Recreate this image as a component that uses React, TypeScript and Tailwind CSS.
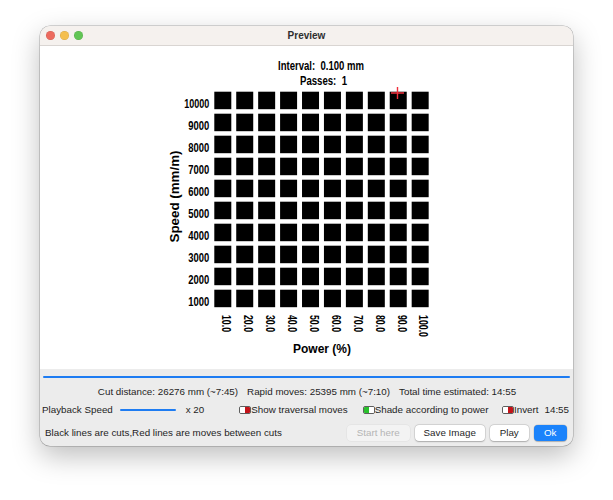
import React from "react";

const colLabels = ["10.0", "20.0", "30.0", "40.0", "50.0", "60.0", "70.0", "80.0", "90.0", "100.0"];
const rowLabels = ["10000", "9000", "8000", "7000", "6000", "5000", "4000", "3000", "2000", "1000"];

const FONT = "Liberation Sans, Arial, sans-serif";

function Chart() {
  const x0 = 174.3;
  const y0 = 45.7;
  const px = 21.93;
  const py = 22;
  return (
    <svg width={533} height={323} className="block bg-white">
      <g fontFamily={FONT} fontWeight="bold" fill="#000" fontSize={12}>
        <text x={238} y={24} xmlSpace="preserve" textLength={86} lengthAdjust="spacingAndGlyphs">
          {"Interval:  0.100 mm"}
        </text>
        <text x={260} y={39} xmlSpace="preserve" textLength={47} lengthAdjust="spacingAndGlyphs">
          {"Passes:  1"}
        </text>

        {rowLabels.map((l, j) => (
          <text
            key={l}
            x={169.3}
            y={y0 + py * j + 16.6}
            textAnchor="end"
            textLength={l.length === 5 ? 25 : 21}
            lengthAdjust="spacingAndGlyphs"
          >
            {l}
          </text>
        ))}

        {colLabels.map((l, i) => (
          <text
            key={l}
            transform={`translate(${x0 + px * i + 7.8} 269) rotate(90)`}
            x={0}
            y={0}
            textLength={l.length === 5 ? 22 : 17}
            lengthAdjust="spacingAndGlyphs"
          >
            {l}
          </text>
        ))}

        <text
          transform="translate(138.8 150.5) rotate(-90)"
          x={0}
          y={0}
          textAnchor="middle"
          fontSize={12.5}
          textLength={92}
          lengthAdjust="spacingAndGlyphs"
        >
          Speed (mm/m)
        </text>
        <text x={282} y={307.3} textAnchor="middle" fontSize={12.5} textLength={58} lengthAdjust="spacingAndGlyphs">
          Power (%)
        </text>
      </g>

      {rowLabels.map((_, j) =>
        colLabels.map((_, i) => (
          <rect key={`${i}-${j}`} x={x0 + px * i} y={y0 + py * j} width={17} height={17.5} fill="#000" />
        ))
      )}

      <g stroke="#f0303c" strokeWidth={1.4}>
        <line x1={357.5} y1={41} x2={357.5} y2={53} />
        <line x1={351} y1={47} x2={364} y2={47} />
      </g>
    </svg>
  );
}

function ToggleIcon({ green }: { green?: boolean }) {
  return (
    <span className="inline-flex h-[8px] w-[12px] shrink-0 overflow-hidden rounded-[2px] border border-[#5e5e5e]">
      <span className={green ? "h-full w-1/2 bg-[#29c12c]" : "h-full w-1/2 bg-white"} />
      <span className={green ? "h-full w-1/2 bg-white" : "h-full w-1/2 bg-[#c4141a]"} />
    </span>
  );
}

function Btn({ children, kind }: { children: React.ReactNode; kind: "disabled" | "normal" | "primary" }) {
  const base = "flex h-[16px] items-center justify-center rounded-[4px] text-[9.8px] leading-none";
  const cls =
    kind === "disabled"
      ? "bg-[#f3f3f3] text-[#b5b5b5] shadow-[0_0_0_0.5px_rgba(0,0,0,0.06)]"
      : kind === "primary"
      ? "bg-[#1b83fb] text-white font-medium shadow-[0_0_0_0.5px_rgba(0,0,0,0.12),0_0.5px_1px_rgba(0,0,0,0.2)]"
      : "bg-white text-[#1f1f1f] shadow-[0_0_0_0.5px_rgba(0,0,0,0.14),0_0.5px_1.5px_rgba(0,0,0,0.22)]";
  return <div className={`${base} ${cls}`}>{children}</div>;
}

export default function App() {
  return (
    <div className="h-[500px] w-[613px] bg-white pl-[40px] pt-[26px] font-['Liberation_Sans',Arial,sans-serif]">
      <div className="flex h-[420px] w-[533px] flex-col overflow-hidden rounded-[10px] bg-[#ececec] shadow-[0_10px_28px_rgba(0,0,0,0.26),0_0_0_0.5px_rgba(0,0,0,0.3)]">
        {/* Title bar */}
        <div className="relative flex h-[20px] shrink-0 items-center border-b border-[#d9d5d2] bg-[#f5f1ee]">
          <div className="flex items-center gap-[5.3px] pl-[5.5px]">
            <span className="h-[9px] w-[9px] rounded-full bg-[#ec6a5e] shadow-[inset_0_0_0_0.5px_rgba(0,0,0,0.12)]" />
            <span className="h-[9px] w-[9px] rounded-full bg-[#f4bf4f] shadow-[inset_0_0_0_0.5px_rgba(0,0,0,0.12)]" />
            <span className="h-[9px] w-[9px] rounded-full bg-[#61c554] shadow-[inset_0_0_0_0.5px_rgba(0,0,0,0.12)]" />
          </div>
          <div className="absolute inset-0 flex items-center justify-center text-[10px] font-bold text-[#2e2e2e]">
            Preview
          </div>
        </div>

        {/* Canvas */}
        <Chart />

        {/* Bottom panel */}
        <div className="flex flex-1 flex-col text-[9.8px] leading-none text-[#1e1e1e]">
          <div className="mx-[3px] mt-[7px] h-[2px] rounded-full bg-[#1e7cf2]" />
          <div className="mt-[7px] flex h-[14px] items-center justify-center gap-[9px] pl-[1px]">
            <span>Cut distance: 26276 mm (~7:45)</span>
            <span>Rapid moves: 25395 mm (~7:10)</span>
            <span>Total time estimated: 14:55</span>
          </div>
          <div className="mt-[4px] flex h-[14px] items-center pl-[2px]">
            <span className="w-[78px] shrink-0">Playback Speed</span>
            <span className="h-[2px] w-[56px] shrink-0 rounded-full bg-[#1e7cf2]" />
            <span className="w-[63.3px] shrink-0 pl-[9.7px]">x 20</span>
            <div className="flex w-[123.4px] shrink-0 items-center">
              <ToggleIcon />
              <span>Show traversal moves</span>
            </div>
            <div className="flex w-[139.3px] shrink-0 items-center">
              <ToggleIcon green />
              <span>Shade according to power</span>
            </div>
            <div className="flex shrink-0 items-center">
              <ToggleIcon />
              <span>Invert</span>
              <span className="ml-[6px]">14:55</span>
            </div>
          </div>
          <div className="mt-[8px] flex h-[16px] items-center pl-[5px] pr-[6.3px]">
            <span className="flex-1">Black lines are cuts,Red lines are moves between cuts</span>
            <div className="flex items-center gap-[5px]">
              <div className="w-[63px]">
                <Btn kind="disabled">Start here</Btn>
              </div>
              <div className="w-[70px]">
                <Btn kind="normal">Save Image</Btn>
              </div>
              <div className="w-[39px]">
                <Btn kind="normal">Play</Btn>
              </div>
              <div className="w-[33px]">
                <Btn kind="primary">Ok</Btn>
              </div>
            </div>
          </div>
        </div>
      </div>
    </div>
  );
}
